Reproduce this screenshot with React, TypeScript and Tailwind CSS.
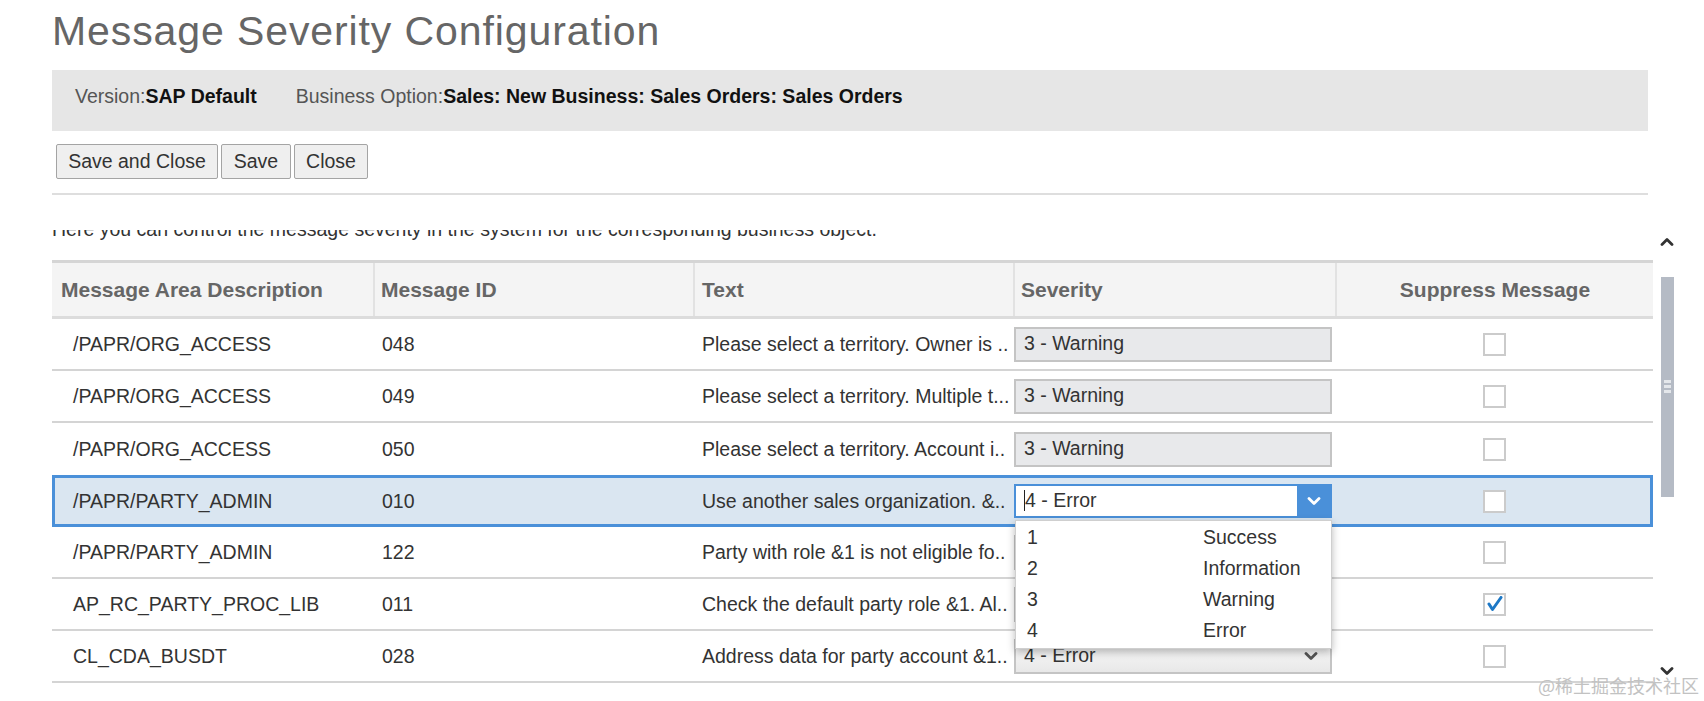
type Row = {
  area: string;
  id: string;
  text: string;
  severity: string;
  suppressed: boolean;
};

const rows: Row[] = [
  { area: "/PAPR/ORG_ACCESS", id: "048", text: "Please select a territory. Owner is ..", severity: "3 - Warning", suppressed: false },
  { area: "/PAPR/ORG_ACCESS", id: "049", text: "Please select a territory. Multiple t...", severity: "3 - Warning", suppressed: false },
  { area: "/PAPR/ORG_ACCESS", id: "050", text: "Please select a territory. Account i..", severity: "3 - Warning", suppressed: false },
  { area: "/PAPR/PARTY_ADMIN", id: "010", text: "Use another sales organization. &..", severity: "4 - Error", suppressed: false },
  { area: "/PAPR/PARTY_ADMIN", id: "122", text: "Party with role &1 is not eligible fo..", severity: "3 - Warning", suppressed: false },
  { area: "AP_RC_PARTY_PROC_LIB", id: "011", text: "Check the default party role &1. Al..", severity: "3 - Warning", suppressed: true },
  { area: "CL_CDA_BUSDT", id: "028", text: "Address data for party account &1..", severity: "4 - Error", suppressed: false },
];

const options = [
  ["1", "Success"],
  ["2", "Information"],
  ["3", "Warning"],
  ["4", "Error"],
];

const cols = "grid grid-cols-[321px_320px_320px_322px_318px]";

function Chevron({ className, color, up }: { className?: string; color: string; up?: boolean }) {
  return (
    <svg width="14" height="9" viewBox="0 0 14 9" className={className}>
      <path
        d={up ? "M2 7.5 L7 2.5 L12 7.5" : "M2 1.5 L7 6.5 L12 1.5"}
        fill="none"
        stroke={color}
        strokeWidth="2.8"
        strokeLinecap="round"
        strokeLinejoin="round"
      />
    </svg>
  );
}

function Checkbox({ checked }: { checked: boolean }) {
  return (
    <div className="w-[23px] h-[23px] border-2 border-[#cbcbcb] bg-white flex items-center justify-center">
      {checked && (
        <svg width="17" height="16" viewBox="0 0 17 16">
          <path d="M3 8 L6.5 13.5 L15 1.5" fill="none" stroke="#1d78c6" strokeWidth="3" strokeLinecap="round" strokeLinejoin="round" />
        </svg>
      )}
    </div>
  );
}

function SeveritySelect({ row, index }: { row: Row; index: number }) {
  if (index === 3) {
    return (
      <div className="relative w-[318px] h-[34px] border-2 border-[#4a90d9] bg-white flex items-center">
        <span className="absolute left-[8px] top-[4px] w-px h-[21px] bg-[#222]" />
        <span className="pl-[9px]">{row.severity}</span>
        <div className="ml-auto w-[33px] h-full bg-[#4a90d9] flex items-center justify-center">
          <Chevron color="#ffffff" />
        </div>
        <div className="absolute left-[-1px] top-[34px] z-10 w-[317px] bg-white border border-[#cfcfcf] shadow-[0_3px_8px_rgba(0,0,0,0.28)] pt-[1px] pb-[2px]">
          {options.map(([n, label]) => (
            <div key={n} className="grid grid-cols-[176px_1fr] h-[31px] items-center pl-[11px]">
              <span>{n}</span>
              <span>{label}</span>
            </div>
          ))}
        </div>
      </div>
    );
  }
  if (index === 6) {
    return (
      <div className="w-[318px] h-[35px] border-2 border-[#c4c4c4] bg-gradient-to-b from-[#fbfbfb] to-[#e8e8e8] flex items-center pl-[8px] pr-[12px]">
        <span>{row.severity}</span>
        <Chevron className="ml-auto" color="#555555" />
      </div>
    );
  }
  return (
    <div className="w-[318px] h-[35px] border-2 border-[#c4c4c4] bg-[#e8e9eb] flex items-center pl-[8px]">
      {row.severity}
    </div>
  );
}

export default function App() {
  return (
    <div className="relative w-[1704px] h-[701px] overflow-hidden bg-white font-['Liberation_Sans',Arial,sans-serif] text-[#333]">
      <h1 className="pl-[52px] pt-[11px] text-[41px] leading-none tracking-[0.9px] text-[#666] font-normal">
        Message Severity Configuration
      </h1>

      <div className="ml-[52px] mt-[18px] w-[1596px] h-[61px] bg-[#e6e6e6] flex gap-[39px] pl-[23px] pt-[15px] text-[19.5px] leading-[22px]">
        <div>
          <span className="text-[#555]">Version:</span>
          <span className="font-bold text-[#111]">SAP Default</span>
        </div>
        <div>
          <span className="text-[#555]">Business Option:</span>
          <span className="font-bold text-[#111]">Sales: New Business: Sales Orders: Sales Orders</span>
        </div>
      </div>

      <div className="ml-[56px] mt-[13px] flex gap-[3px] text-[19.5px]">
        <button className="w-[162px] h-[35px] border border-[#a4a4a4] bg-[#efefef] text-[#333] rounded-[2px]">Save and Close</button>
        <button className="w-[70px] h-[35px] border border-[#a4a4a4] bg-[#efefef] text-[#333] rounded-[2px]">Save</button>
        <button className="w-[74px] h-[35px] border border-[#a4a4a4] bg-[#efefef] text-[#333] rounded-[2px]">Close</button>
      </div>

      <div className="ml-[52px] mt-[14px] w-[1596px] h-[2px] bg-[#dedede]" />

      <div className="mt-[35px] h-[471px] flex">
        <div className="ml-[52px] w-[1601px] overflow-hidden">
          <p className="-mt-[12px] text-[19.5px] leading-[22px] text-[#333] whitespace-nowrap">
            Here you can control the message severity in the system for the corresponding business object.
          </p>

          <div className="mt-[20px]">
            <div className={`${cols} h-[59px] bg-[#f4f4f4] border-t-[3px] border-t-[#d5d5d5] border-b-[3px] border-b-[#dcdcdc] text-[21px] font-bold text-[#666]`}>
              <div className="pl-[9px] flex items-center">Message Area Description</div>
              <div className="pl-[6px] flex items-center border-l-2 border-[#e2e2e2]">Message ID</div>
              <div className="pl-[7px] flex items-center border-l-2 border-[#e2e2e2]">Text</div>
              <div className="pl-[6px] flex items-center border-l-2 border-[#e2e2e2]">Severity</div>
              <div className="flex items-center justify-center border-l-2 border-[#e2e2e2]">Suppress Message</div>
            </div>

            {rows.map((row, i) => {
              const selected = i === 3;
              const noBorder = i === 2 || i === 3;
              return (
                <div
                  key={i}
                  className={`${cols} h-[52px] text-[19.5px] ${
                    selected ? "relative bg-[#dae6f1] outline-[3px] outline-[#4a90d9] -outline-offset-[3px]" : ""
                  } ${noBorder ? "" : "border-b-2 border-[#d4d4d4]"}`}
                >
                  <div className="pl-[21px] pt-[2px] flex items-center whitespace-nowrap">{row.area}</div>
                  <div className="pl-[9px] pt-[2px] flex items-center">{row.id}</div>
                  <div className="pl-[9px] pt-[2px] flex items-center whitespace-nowrap overflow-hidden">{row.text}</div>
                  <div className="pl-[1px] flex items-center">
                    <SeveritySelect row={row} index={i} />
                  </div>
                  <div className="flex items-center justify-center">
                    <Checkbox checked={row.suppressed} />
                  </div>
                </div>
              );
            })}
          </div>
        </div>

        <div className="ml-[8px] w-[13px] flex flex-col items-center">
          <Chevron className="mt-[7px] -ml-[2px]" color="#333333" up />
          <div className="mt-[31px] w-[13px] h-[220px] bg-[#b5bbc5] flex flex-col items-center gap-[2px] pt-[103px]">
            <span className="w-[7px] h-[3px] bg-[#e4e7eb]" />
            <span className="w-[7px] h-[3px] bg-[#e4e7eb]" />
            <span className="w-[7px] h-[3px] bg-[#e4e7eb]" />
          </div>
          <Chevron className="mt-[170px] -ml-[2px]" color="#333333" />
        </div>
      </div>

      <div className="absolute left-[1538px] top-[674px] text-[18px] leading-[22px] text-[#c2c2c2] font-['Noto_Sans_CJK_SC',sans-serif] whitespace-nowrap">
        @稀土掘金技术社区
      </div>
    </div>
  );
}
